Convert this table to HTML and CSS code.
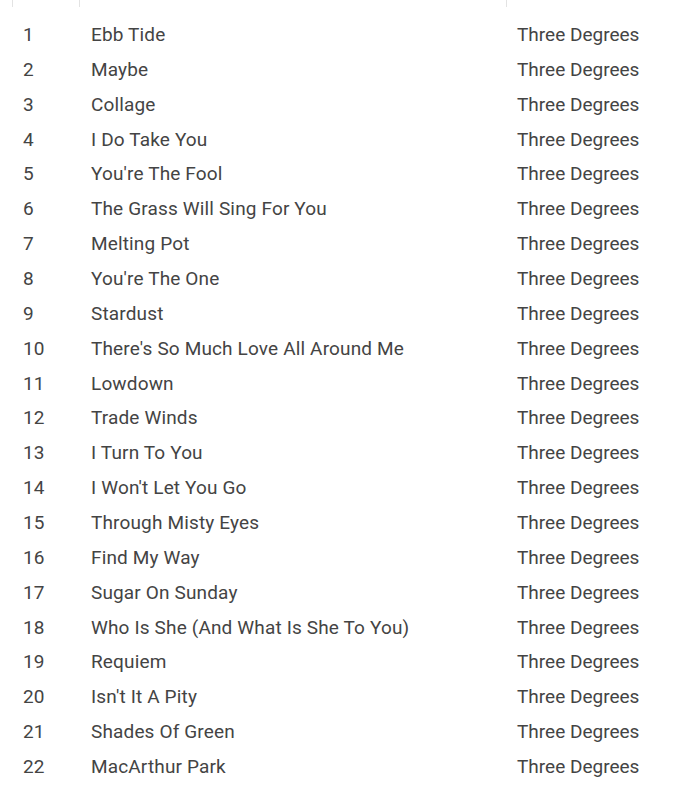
FILE: index.html
```html
<!DOCTYPE html>
<html lang="en">
<head>
  <meta charset="UTF-8" />
  <title>Three Degrees - Tracks</title>
  <link rel="stylesheet" href="styles.css">
</head>
<body>
  <div class="tracklist">
    <div class="header">
      <span class="col-gap"></span>
      <span class="col-num"></span>
      <span class="col-title"></span>
      <span class="col-artist"></span>
    </div>

    <div class="rows">
      <div class="row"><span class="num">1</span><span class="title">Ebb Tide</span><span class="artist">Three Degrees</span></div>
      <div class="row"><span class="num">2</span><span class="title">Maybe</span><span class="artist">Three Degrees</span></div>
      <div class="row"><span class="num">3</span><span class="title">Collage</span><span class="artist">Three Degrees</span></div>
      <div class="row"><span class="num">4</span><span class="title">I Do Take You</span><span class="artist">Three Degrees</span></div>
      <div class="row"><span class="num">5</span><span class="title">You're The Fool</span><span class="artist">Three Degrees</span></div>
      <div class="row"><span class="num">6</span><span class="title">The Grass Will Sing For You</span><span class="artist">Three Degrees</span></div>
      <div class="row"><span class="num">7</span><span class="title">Melting Pot</span><span class="artist">Three Degrees</span></div>
      <div class="row"><span class="num">8</span><span class="title">You're The One</span><span class="artist">Three Degrees</span></div>
      <div class="row"><span class="num">9</span><span class="title">Stardust</span><span class="artist">Three Degrees</span></div>
      <div class="row"><span class="num">10</span><span class="title">There's So Much Love All Around Me</span><span class="artist">Three Degrees</span></div>
      <div class="row"><span class="num">11</span><span class="title">Lowdown</span><span class="artist">Three Degrees</span></div>
      <div class="row"><span class="num">12</span><span class="title">Trade Winds</span><span class="artist">Three Degrees</span></div>
      <div class="row"><span class="num">13</span><span class="title">I Turn To You</span><span class="artist">Three Degrees</span></div>
      <div class="row"><span class="num">14</span><span class="title">I Won't Let You Go</span><span class="artist">Three Degrees</span></div>
      <div class="row"><span class="num">15</span><span class="title">Through Misty Eyes</span><span class="artist">Three Degrees</span></div>
      <div class="row"><span class="num">16</span><span class="title">Find My Way</span><span class="artist">Three Degrees</span></div>
      <div class="row"><span class="num">17</span><span class="title">Sugar On Sunday</span><span class="artist">Three Degrees</span></div>
      <div class="row"><span class="num">18</span><span class="title">Who Is She (And What Is She To You)</span><span class="artist">Three Degrees</span></div>
      <div class="row"><span class="num">19</span><span class="title">Requiem</span><span class="artist">Three Degrees</span></div>
      <div class="row"><span class="num">20</span><span class="title">Isn't It A Pity</span><span class="artist">Three Degrees</span></div>
      <div class="row"><span class="num">21</span><span class="title">Shades Of Green</span><span class="artist">Three Degrees</span></div>
      <div class="row"><span class="num">22</span><span class="title">MacArthur Park</span><span class="artist">Three Degrees</span></div>
    </div>
  </div>
</body>
</html>
```

FILE: styles.css
```css
body {
  margin: 0;
  background-color: #ffffff;
  font-family: Roboto, "Liberation Sans", sans-serif;
  color: #444444;
}

.tracklist {
  width: 680px;
}

.header {
  display: grid;
  grid-template-columns: 12px 67px 427px 1fr;
  height: 7px;
}

.header span {
  border-left: 1px solid #e3e3e3;
}

.header .col-gap {
  border-left: none;
}

.rows {
  padding-top: 11px;
}

.row {
  display: grid;
  grid-template-columns: 91px 426px 1fr;
  height: 34.86px;
  line-height: 34.86px;
  font-size: 19px;
  white-space: nowrap;
}

.num {
  padding-left: 23px;
}

.title {
  letter-spacing: 0.15px;
}
```
